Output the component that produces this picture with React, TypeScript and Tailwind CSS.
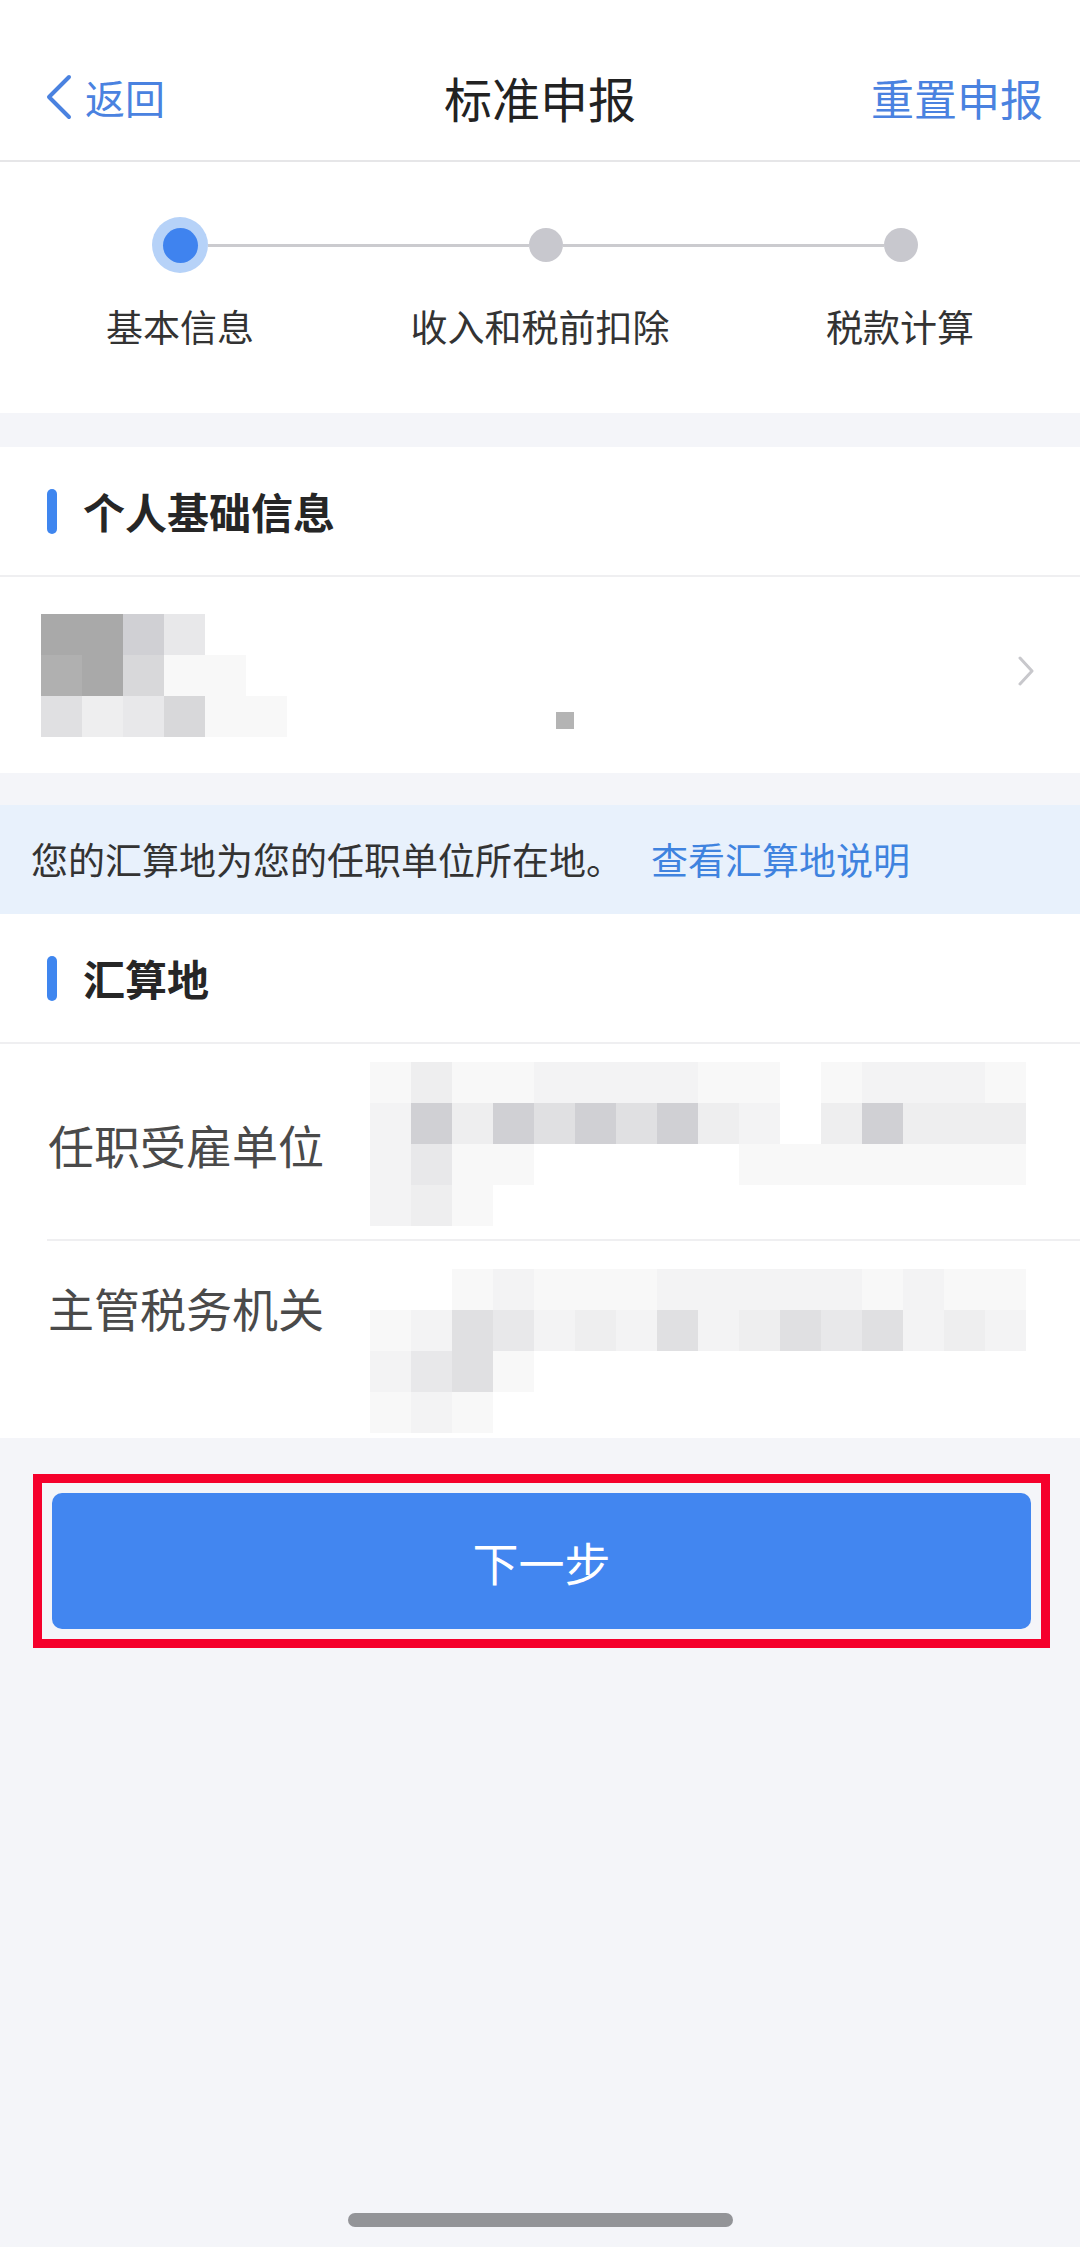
import React from 'react';

// mosaic shades used by the privacy-blurred areas
const shade: Record<string, string> = {
  '1': 'bg-[#a9a9a9]',
  '2': 'bg-[#b0b0b0]',
  '3': 'bg-[#d0d0d4]',
  '4': 'bg-[#d8d8da]',
  '5': 'bg-[#e0e0e2]',
  '6': 'bg-[#e8e8ea]',
  '7': 'bg-[#eeeeef]',
  '8': 'bg-[#f3f3f4]',
  '9': 'bg-[#f8f8f8]',
  '0': 'bg-white',
};

function Mosaic({ rows }: { rows: string[] }) {
  return (
    <div className="flex flex-col">
      {rows.map((row, i) => (
        <div key={i} className="flex">
          {row.split('').map((c, j) => (
            <div key={j} className={`w-[41px] h-[41px] ${shade[c]}`} />
          ))}
        </div>
      ))}
    </div>
  );
}

function SectionTitle({ title }: { title: string }) {
  return (
    <div className="h-[130px] flex items-center pl-[47px] border-b-2 border-[#efeff1]">
      <div className="w-[10px] h-[45px] rounded-full bg-[#3f86ef]" />
      <span className="ml-[26px] text-[42px] font-bold text-[#262626] leading-none">{title}</span>
    </div>
  );
}

export default function App() {
  return (
    <div className="min-h-screen bg-[#f4f5f9] flex flex-col font-['Noto_Sans_CJK_SC','Noto_Sans',sans-serif]">
      {/* 导航栏 */}
      <div className="h-[162px] bg-white border-b-2 border-[#e6e6e8] pt-[60px]">
        <div className="h-[74px] grid grid-cols-3 items-center">
          <div className="flex items-center pl-[45px]">
            <svg width="27" height="46" viewBox="0 0 27 46" fill="none">
              <polyline points="24,3 4,23 24,43" stroke="#4a82e0" strokeWidth="4" strokeLinecap="round" strokeLinejoin="round" />
            </svg>
            <span className="ml-[13px] text-[40px] text-[#4a82e0] leading-none">返回</span>
          </div>
          <div className="text-center text-[48px] text-[#222] leading-none">标准申报</div>
          <div className="text-right pr-[37px] text-[43px] text-[#4a82e0] leading-none">重置申报</div>
        </div>
      </div>

      {/* 步骤条 */}
      <div className="h-[251px] bg-white pt-[55px]">
        <div className="h-[56px] flex items-center pl-[152px] pr-[162px]">
          <div className="w-14 h-14 rounded-full bg-[#b6d2f8] flex items-center justify-center shrink-0">
            <div className="w-[35px] h-[35px] rounded-full bg-[#3f83ef]" />
          </div>
          <div className="flex-1 h-[3px] bg-[#cbcbcf]" />
          <div className="w-[34px] h-[34px] rounded-full bg-[#c8c8ce] shrink-0" />
          <div className="flex-1 h-[3px] bg-[#cbcbcf]" />
          <div className="w-[34px] h-[34px] rounded-full bg-[#c8c8ce] shrink-0" />
        </div>
        <div className="mt-[31px] grid grid-cols-3 text-center text-[37px] leading-[44px] text-[#333]">
          <span>基本信息</span>
          <span>收入和税前扣除</span>
          <span>税款计算</span>
        </div>
      </div>

      <div className="h-[34px]" />

      {/* 个人基础信息 */}
      <div className="bg-white">
        <SectionTitle title="个人基础信息" />
        <div className="relative h-[196px] flex items-start pl-[41px]">
          <div className="mt-[37px]">
            <Mosaic rows={['1136', '21499', '576499']} />
          </div>
          <div className="flex-1" />
          <svg className="self-center mr-[45px] mb-[8px]" width="18" height="30" viewBox="0 0 18 30" fill="none">
            <polyline points="3,2 15,15 3,28" stroke="#c8c8cc" strokeWidth="3" strokeLinecap="round" strokeLinejoin="round" />
          </svg>
          <div className="absolute left-[556px] top-[135px] w-[18px] h-[17px] bg-[#b4b4b4]" />
        </div>
      </div>

      <div className="h-[32px]" />

      {/* 提示 */}
      <div className="h-[109px] bg-[#e8f1fc] flex items-center pl-[31px] text-[37px] leading-none text-[#333]">
        <span>您的汇算地为您的任职单位所在地。</span>
        <span className="ml-[28px] text-[#3f83df]">查看汇算地说明</span>
      </div>

      {/* 汇算地 */}
      <div className="bg-white">
        <SectionTitle title="汇算地" />
        <div className="h-[195px] flex items-start pl-[48px]">
          <div className="w-[322px] shrink-0 pt-[72px] text-[46px] leading-[56px] text-[#4a4a4a]">任职受雇单位</div>
          <div className="mt-[18px]">
            <Mosaic rows={['9799888899098889', '8373535378073777', '8699000009999999', '879']} />
          </div>
        </div>
        <div className="ml-[47px] h-[2px] bg-[#efeff1]" />
        <div className="h-[197px] flex items-start pl-[48px]">
          <div className="w-[322px] shrink-0 pt-[38px] text-[46px] leading-[56px] text-[#4a4a4a]">主管税务机关</div>
          <div className="mt-[28px]">
            <Mosaic rows={['0098999888889899', '9856878587565878', '8659', '989']} />
          </div>
        </div>
      </div>

      <div className="h-[36px]" />

      {/* 下一步 */}
      <div className="ml-[33px] w-[1017px] border-[9px] border-[#f5002c] p-[10px]">
        <button className="w-full h-[136px] rounded-[10px] bg-[#4286f0] text-white text-[46px] leading-none">
          下一步
        </button>
      </div>

      <div className="flex-1" />
      <div className="mx-auto mb-[20px] w-[385px] h-[14px] rounded-full bg-[#939498]" />
    </div>
  );
}
